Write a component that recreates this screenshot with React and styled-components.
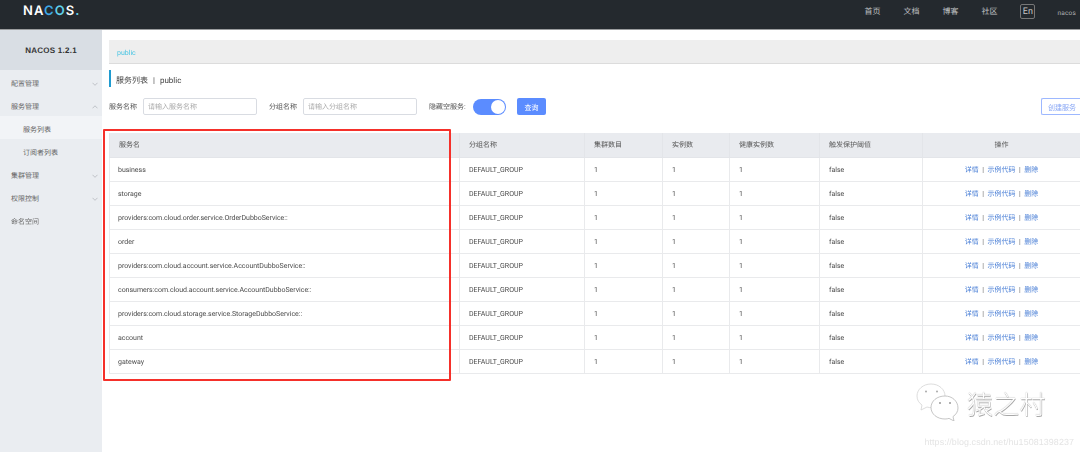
import React from "react";
import styled, { createGlobalStyle } from "styled-components";

const Global = createGlobalStyle`
  html, body { margin: 0; padding: 0; background: #fff; width: 1080px; height: 452px; overflow: hidden; }
  body { font-family: Roboto, "Noto Sans CJK SC", sans-serif; font-size: 7px; color: #555; text-rendering: geometricPrecision; }
  * { box-sizing: border-box; }
`;

const Page = styled.div`
  position: relative; width: 1080px; height: 452px; overflow: hidden;
  display: flex; flex-direction: column; filter: blur(0.35px);
`;
const Header = styled.header`
  flex: none; height: 30px; background: #24292e; border-bottom: 1px solid #9a9c9e;
  display: flex; align-items: center; padding-left: 23px; color: #c8c8c8;
`;
const Logo = styled.div`
  font: 600 13px/1 Inter, sans-serif; color: #fff; letter-spacing: 1.1px; margin-top: -7px;
  span { color: #3fa9e6; }
  i { font-style: normal; color: #5fd0ea; }
`;
const Nav = styled.nav`
  margin-left: auto; display: flex; align-items: center; margin-right: 4px; margin-top: -6px;
`;
const NavLink = styled.a`width: 39px; color: #c0c2c4; font-size: 8px;`;
const Lang = styled.div`
  width: 15px; height: 15px; border: 1px solid #777; border-radius: 2px; color: #c4c4c4;
  display: flex; align-items: center; justify-content: center; font-size: 9px; margin-right: 22px;
`;
const User = styled.div`font-size: 6.5px; color: #b0b2b4; letter-spacing: 0.2px; padding-top: 2px;`;
const Body = styled.div`flex: 1; display: flex; min-height: 0;`;
const Side = styled.aside`flex: none; width: 102px; background: #eaedf1;`;
const SideTitle = styled.div`
  height: 40px; background: #d9dee4; display: flex; align-items: center; justify-content: center;
  font: 700 8px "Liberation Sans", sans-serif; color: #333; letter-spacing: 0.25px;
`;
const Menu = styled.div`
  height: 23px; display: flex; align-items: center; justify-content: space-between;
  padding: 4px 4px 0 ${p => (p.$sub ? "23px" : "11px")};
  font-size: 7px; color: #666; background: ${p => (p.$sel ? "#f2f4f7" : "transparent")};
`;
const Main = styled.main`flex: 1; min-width: 0; padding: 10px 0 0 7px; overflow: hidden;`;
const Crumb = styled.div`
  height: 24px; background: #eeeeee; border-bottom: 1px solid #dcdcdc; padding: 2px 0 0 8px;
  display: flex; align-items: center; color: #49c5e3; font-size: 7px;
`;
const Title = styled.h1`
  margin: 6px 0 0; height: 17px; border-left: 2px solid #209bd0; padding: 3px 0 0 5px; font-weight: 400;
  font-size: 8px; display: flex; align-items: center; color: #444; gap: 5px;
`;
const Form = styled.div`
  margin-top: 11px; height: 17px; display: flex; align-items: center; color: #555;
`;
const Label = styled.label`margin-right: ${p => p.$mr || 6}px; white-space: nowrap; width: ${p => p.$w}px;`;
const Input = styled.div`
  width: 114px; height: 17px; border: 1px solid #d9dce2; border-radius: 2px; color: #aaa; padding: 0 4px;
  display: flex; align-items: center; margin-right: 12px;
`;
const Toggle = styled.div`
  width: 33px; height: 16px; border-radius: 8px; background: #5b8cff; margin-right: 11px; position: relative; flex: none;
  &::after { content: ""; position: absolute; right: 1px; top: 1px; width: 14px; height: 14px; border-radius: 50%; background: #fff; }
`;
const Btn = styled.button`
  width: 29px; height: 17px; border: 0; border-radius: 2px; background: #5b8cff; color: #fff; font: inherit; padding: 0;
`;
const Create = styled.button`
  margin-left: auto; width: 39px; height: 17px; border: 1px solid #9db8ff; border-right: 0; border-radius: 2px 0 0 2px;
  background: #fff; color: #8aa8f5; font: inherit; padding: 0 0 0 6px; flex: none; text-align: left; white-space: nowrap;
`;
const Table = styled.table`
  margin-top: 18px; width: 971px; border-collapse: collapse; table-layout: fixed; font-size: 7px; color: #555;
`;
const Th = styled.th`
  height: 24px; background: #e9ebef; font-weight: 400; text-align: ${p => (p.$center ? "center" : "left")}; padding: 0 9px;
  border: 1px solid #e3e5e9; border-width: 0 1px 1px 1px; color: #555;
`;
const Td = styled.td`
  height: 24px; padding: 1px 9px 0; border: 1px solid #e9eaec; white-space: nowrap; color: #4c4c4c;
  text-align: ${p => (p.$center ? "center" : "left")};
`;
const Name = styled.span`letter-spacing: -0.02px; margin-left: -1px;`;
const A = styled.a`color: #4a7fd6;`;
const Sep = styled.span`color: #666; margin: 0 3.5px;`;
const RedBox = styled.div`
  position: absolute; left: 103px; top: 129px; width: 348px; height: 252px;
  border: 2px solid #f5302a; border-radius: 1px; pointer-events: none;
`;
const Watermark = styled.div`
  position: absolute; left: 916px; top: 383px; display: flex; align-items: center; gap: 7px;
`;
const Mark = styled.span`
  font: 300 26px/1 "Noto Sans CJK SC", sans-serif; color: #fff; letter-spacing: 0.3px; margin-top: 3px;
  text-shadow: 0 0 1px #999, 0.5px 0.5px 0.5px #aaa;
`;
const Csdn = styled.div`
  position: absolute; right: 6px; top: 437px; font: 8.9px "Liberation Sans", sans-serif; color: #e4e4e4; letter-spacing: 0.1px;
`;

const Chevron = ({ up }) => (
  <svg width="6" height="4" viewBox="0 0 6 4" fill="none" stroke="#b4b8bd" strokeWidth="0.8">
    <path d={up ? "M.5 3.300 3 .8l2.500 2.500" : "M.5.8 3 3.300 5.500.8"} />
  </svg>
);

const Bubbles = () => (
  <svg width="44" height="38" viewBox="0 0 44 38" fill="#fff" stroke="#d4d4d4" strokeWidth="0.8">
    <path d="M15 1C7 1 1 6.500 1 13c0 4 2 7 5 9l-1 5 6-3c2 .6 3 .7 5 .7C23 24.700 29 19.500 29 13S23 1 15 1z" />
    <path d="M29 13c-8 0-14 5-14 11.500S21 36 29 36c1.500 0 3-.3 4-.6l5 2.600-1-4.400c3-2 5-5 5-8.600C42 18 36 13 29 13z" stroke="#b8b8b8" />
    <circle cx="10" cy="8.500" r="1" fill="#aaa" stroke="none" />
    <circle cx="21" cy="8.500" r="1" fill="#aaa" stroke="none" />
    <circle cx="24" cy="20" r="1" fill="#999" stroke="none" />
    <circle cx="34" cy="20" r="1" fill="#999" stroke="none" />
  </svg>
);

const rows = [
  "business", "storage", "providers:com.cloud.order.service.OrderDubboService::", "order",
  "providers:com.cloud.account.service.AccountDubboService::",
  "consumers:com.cloud.account.service.AccountDubboService::",
  "providers:com.cloud.storage.service.StorageDubboService::", "account", "gateway",
];
const widths = [350, 125, 78, 67, 90, 103, 158];
const heads = ["服务名", "分组名称", "集群数目", "实例数", "健康实例数", "触发保护阈值"];

export default function App() {
  return (
    <Page>
      <Global />
      <Header>
        <Logo>NA<span>C</span><i>O</i>S<i>.</i></Logo>
        <Nav>
          <NavLink>首页</NavLink><NavLink>文档</NavLink><NavLink>博客</NavLink><NavLink>社区</NavLink>
          <Lang>En</Lang>
          <User>nacos</User>
        </Nav>
      </Header>
      <Body>
        <Side>
          <SideTitle>NACOS 1.2.1</SideTitle>
          <Menu>配置管理<Chevron /></Menu>
          <Menu>服务管理<Chevron up /></Menu>
          <Menu $sub $sel>服务列表</Menu>
          <Menu $sub>订阅者列表</Menu>
          <Menu>集群管理<Chevron /></Menu>
          <Menu>权限控制<Chevron /></Menu>
          <Menu>命名空间</Menu>
        </Side>
        <Main>
          <Crumb>public</Crumb>
          <Title>服务列表 <span>|</span> <span>public</span></Title>
          <Form>
            <Label $w={28}>服务名称</Label>
            <Input>请输入服务名称</Input>
            <Label $w={28}>分组名称</Label>
            <Input>请输入分组名称</Input>
            <Label $w={37} $mr={7}>隐藏空服务:</Label>
            <Toggle />
            <Btn>查询</Btn>
            <Create>创建服务</Create>
          </Form>
          <Table>
            <colgroup>{widths.map((w, i) => <col key={i} width={w} />)}</colgroup>
            <thead>
              <tr>{heads.map(h => <Th key={h}>{h}</Th>)}<Th $center>操作</Th></tr>
            </thead>
            <tbody>
              {rows.map(r => (
                <tr key={r}>
                  <Td><Name>{r}</Name></Td><Td>DEFAULT_GROUP</Td><Td>1</Td><Td>1</Td><Td>1</Td><Td>false</Td>
                  <Td $center><A>详情</A><Sep>|</Sep><A>示例代码</A><Sep>|</Sep><A>删除</A></Td>
                </tr>
              ))}
            </tbody>
          </Table>
        </Main>
      </Body>
      <RedBox />
      <Watermark><Bubbles /><Mark>猿之村</Mark></Watermark>
      <Csdn>https://blog.csdn.net/hu15081398237</Csdn>
    </Page>
  );
}
